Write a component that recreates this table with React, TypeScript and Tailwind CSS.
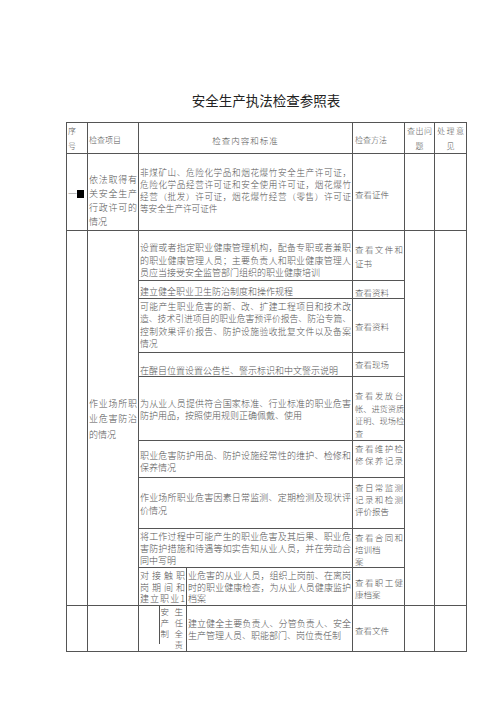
import React from 'react';

const C = 'border border-[#555] p-0 align-top';

type LinesProps = {
  lines: string[];
  just?: number;
  className?: string;
};

// one div per printed line; the first `just` lines are spread to the cell width
const Lines = ({ lines, just, className }: LinesProps) => {
  const n = just ?? lines.length - 1;
  return (
    <div className={className}>
      {lines.map((l, i) => (
        <div
          key={i}
          className={i < n ? 'whitespace-nowrap text-justify [text-align-last:justify]' : 'whitespace-nowrap'}
        >
          {l}
        </div>
      ))}
    </div>
  );
};

const App = () => {
  return (
    <div className="w-[500px] h-[707px] bg-white overflow-hidden font-['Noto_Sans_CJK_SC','Noto_Sans',sans-serif]">
      <div className="ml-[66px] mt-[92px] w-[400px] h-[16px] text-center text-[13.5px] leading-[16px] text-[#222]">
        安全生产执法检查参照表
      </div>

      <table className="ml-[66px] mt-[14px] w-[400px] table-fixed border-collapse font-light text-[#555]">
        <colgroup>
          <col className="w-[21px]" />
          <col className="w-[51px]" />
          <col className="w-[20px]" />
          <col className="w-[28px]" />
          <col className="w-[166px]" />
          <col className="w-[52px]" />
          <col className="w-[30px]" />
          <col className="w-[32px]" />
        </colgroup>
        <tbody>
          {/* header */}
          <tr className="h-[31px]">
            <td className={C}>
              <Lines lines={['序', '号']} just={0} className="pl-[1px] text-[8px] leading-[15px]" />
            </td>
            <td className={C}>
              <div className="pl-[1px] pt-[11px] text-[8px] leading-[12px]">检查项目</div>
            </td>
            <td className={C} colSpan={3}>
              <div className="pt-[11px] text-center text-[8.5px] leading-[12px] tracking-[1px]">检查内容和标准</div>
            </td>
            <td className={C}>
              <div className="pl-[2px] pt-[11px] text-[8px] leading-[12px]">检查方法</div>
            </td>
            <td className={C}>
              <div className="px-[2px] text-[8px] leading-[15px]">
                <div className="text-justify [text-align-last:justify]">查出问</div>
                <div className="text-center">题</div>
              </div>
            </td>
            <td className={C}>
              <div className="px-[2px] text-[8px] leading-[15px]">
                <div className="text-justify [text-align-last:justify]">处理意</div>
                <div className="text-center">见</div>
              </div>
            </td>
          </tr>

          {/* row 1 */}
          <tr className="h-[77px]">
            <td className={C}>
              <div className="flex items-center pl-[1px] pt-[34px] text-[9px] leading-[12px]">
                <span className="text-[#888]">一</span>
                <span className="inline-block w-[7px] h-[8px] bg-black" />
              </div>
            </td>
            <td className={C}>
              <Lines
                lines={['依法取得有', '关安全生产', '行政许可的', '情况']}
                className="px-[1px] pt-[19px] text-[9px] leading-[14px]"
              />
            </td>
            <td className={C} colSpan={3}>
              <Lines
                lines={[
                  '非煤矿山、危险化学品和烟花爆竹安全生产许可证，',
                  '危险化学品经营许可证和安全使用许可证，烟花爆竹',
                  '经营（批发）许可证，烟花爆竹经营（零售）许可证',
                  '等安全生产许可证件',
                ]}
                className="px-[1px] pt-[12px] text-[8.6px] leading-[12px]"
              />
            </td>
            <td className={C}>
              <div className="pl-[2px] pt-[34px] text-[8.5px] leading-[12px]">查看证件</div>
            </td>
            <td className={C} />
            <td className={C} />
          </tr>

          {/* section: 作业场所职业危害防治 */}
          <tr className="h-[50px]">
            <td className={C} rowSpan={9} />
            <td className={C + ' !align-middle'} rowSpan={9}>
              <Lines
                lines={['作业场所职', '业危害防治', '的情况']}
                className="px-[1px] pt-[2px] text-[9px] leading-[15.5px]"
              />
            </td>
            <td className={C} colSpan={3}>
              <Lines
                lines={[
                  '设置或者指定职业健康管理机构，配备专职或者兼职',
                  '的职业健康管理人员；主要负责人和职业健康管理人',
                  '员应当接受安全监管部门组织的职业健康培训',
                ]}
                className="px-[1px] pt-[11px] text-[9px] leading-[12.5px]"
              />
            </td>
            <td className={C}>
              <Lines lines={['查看文件和', '证书']} className="pl-[2px] pr-[1px] pt-[11px] text-[8.5px] leading-[14px]" />
            </td>
            <td className={C} rowSpan={9} />
            <td className={C} rowSpan={9} />
          </tr>
          <tr className="h-[18px]">
            <td className={C} colSpan={3}>
              <div className="px-[1px] pt-[5px] text-[9px] leading-[12px] whitespace-nowrap">建立健全职业卫生防治制度和操作规程</div>
            </td>
            <td className={C}>
              <div className="pl-[2px] pt-[5px] text-[8.5px] leading-[12px]">查看资料</div>
            </td>
          </tr>
          <tr className="h-[54px]">
            <td className={C} colSpan={3}>
              <Lines
                lines={[
                  '可能产生职业危害的新、改、扩建工程项目和技术改',
                  '造、技术引进项目的职业危害预评价报告、防治专篇、',
                  '控制效果评价报告、防护设施验收批复文件以及备案',
                  '情况',
                ]}
                className="px-[1px] pt-[2px] text-[8.8px] leading-[12.3px]"
              />
            </td>
            <td className={C}>
              <div className="pl-[2px] pt-[21px] text-[8.5px] leading-[12px]">查看资料</div>
            </td>
          </tr>
          <tr className="h-[24px]">
            <td className={C} colSpan={3}>
              <div className="px-[1px] pt-[12px] text-[9px] leading-[11px] whitespace-nowrap">在醒目位置设置公告栏、警示标识和中文警示说明</div>
            </td>
            <td className={C}>
              <div className="pl-[2px] pt-[5px] text-[8.5px] leading-[12px]">查看现场</div>
            </td>
          </tr>
          <tr className="h-[64px]">
            <td className={C} colSpan={3}>
              <Lines
                lines={['为从业人员提供符合国家标准、行业标准的职业危害', '防护用品，按照使用规则正确佩戴、使用']}
                className="px-[1px] pt-[21px] text-[9px] leading-[12px]"
              />
            </td>
            <td className={C}>
              <Lines
                lines={['查看发放台', '帐、进货资质', '证明、现场检', '查']}
                className="pl-[2px] pr-[1px] pt-[12px] text-[8.2px] leading-[12.5px]"
              />
            </td>
          </tr>
          <tr className="h-[37px]">
            <td className={C} colSpan={3}>
              <Lines
                lines={['职业危害防护用品、防护设施经常性的维护、检修和', '保养情况']}
                className="px-[1px] pt-[9px] text-[9px] leading-[11.5px]"
              />
            </td>
            <td className={C}>
              <Lines
                lines={['查看维护检', '修保养记录']}
                just={2}
                className="pl-[2px] pr-[1px] pt-[1px] text-[8.5px] leading-[12px]"
              />
            </td>
          </tr>
          <tr className="h-[51px]">
            <td className={C} colSpan={3}>
              <Lines
                lines={['作业场所职业危害因素日常监测、定期检测及现状评', '价情况']}
                className="px-[1px] pt-[13px] text-[9px] leading-[13px]"
              />
            </td>
            <td className={C}>
              <Lines
                lines={['查日常监测', '记录和检测', '评价报告']}
                className="pl-[2px] pr-[1px] pt-[3px] text-[8.5px] leading-[12px]"
              />
            </td>
          </tr>
          <tr className="h-[39px]">
            <td className={C} colSpan={3}>
              <Lines
                lines={[
                  '将工作过程中可能产生的职业危害及其后果、职业危',
                  '害防护措施和待遇等如实告知从业人员，并在劳动合',
                  '同中写明',
                ]}
                className="px-[1px] pt-[2px] text-[9px] leading-[12px]"
              />
            </td>
            <td className={C}>
              <Lines
                lines={['查看合同和', '培训档', '案']}
                just={1}
                className="pl-[2px] pr-[1px] pt-[2px] text-[8.5px] leading-[12px]"
              />
            </td>
          </tr>
          <tr className="h-[38px]">
            <td className={C} colSpan={2}>
              <Lines
                lines={['对接触职', '岗期间和', '建立职业1']}
                just={3}
                className="px-[1px] pt-[2px] text-[9px] leading-[11.5px]"
              />
            </td>
            <td className={C}>
              <Lines
                lines={['业危害的从业人员，组织上岗前、在离岗', '时的职业健康检查，为从业人员健康监护', '档案']}
                className="px-[1px] pt-[2px] text-[9px] leading-[11.5px]"
              />
            </td>
            <td className={C}>
              <Lines
                lines={['查看职工健', '康档案']}
                className="pl-[2px] pr-[1px] pt-[8px] text-[8.5px] leading-[12px]"
              />
            </td>
          </tr>

          {/* last row */}
          <tr className="h-[46px]">
            <td className={C} />
            <td className={C} />
            <td className={C + ' border-r-0'} />
            <td className={C + ' border-l-0'}>
              <div className="flex">
                <div className="h-[38px] border-l border-[#555]" />
                <div className="grid grid-cols-[12px_12px] gap-x-[2px] pl-[1px] text-[8.5px] leading-[11px]">
                  <span>安</span>
                  <span>生</span>
                  <span>产</span>
                  <span>任</span>
                  <span>制</span>
                  <span>全</span>
                  <span />
                  <span>责</span>
                </div>
              </div>
            </td>
            <td className={C}>
              <Lines
                lines={['建立健全主要负责人、分管负责人、安全', '生产管理人员、职能部门、岗位责任制']}
                just={1}
                className="px-[1px] pt-[12px] text-[9px] leading-[12px]"
              />
            </td>
            <td className={C}>
              <div className="pl-[2px] pt-[18px] text-[8.5px] leading-[12px]">查看文件</div>
            </td>
            <td className={C} />
            <td className={C} />
          </tr>
        </tbody>
      </table>
    </div>
  );
};

export default App;
